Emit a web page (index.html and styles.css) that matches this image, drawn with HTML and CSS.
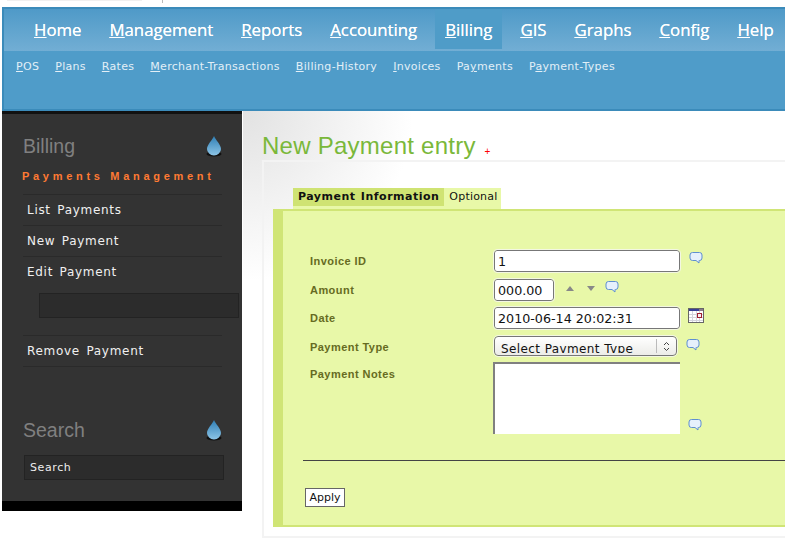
FILE: index.html
```html
<!DOCTYPE html>
<html lang="en">
<head>
    <meta charset="UTF-8">
    <title>New Payment entry</title>
    <link rel="stylesheet" href="styles.css">
</head>
<body>
    <div class="topline"><span class="topbar"></span><span class="topmark"></span></div>
    <div class="header">
        <ul class="menu">
            <li><a href="#"><u>H</u>ome</a></li>
            <li><a href="#"><u>M</u>anagement</a></li>
            <li><a href="#"><u>R</u>eports</a></li>
            <li><a href="#"><u>A</u>ccounting</a></li>
            <li class="active"><a href="#"><u>B</u>illing</a></li>
            <li><a href="#"><u>G</u>IS</a></li>
            <li><a href="#"><u>G</u>raphs</a></li>
            <li><a href="#"><u>C</u>onfig</a></li>
            <li><a href="#"><u>H</u>elp</a></li>
        </ul>
        <ul class="submenu">
            <li><a href="#"><u>P</u>OS</a></li>
            <li><a href="#"><u>P</u>lans</a></li>
            <li><a href="#"><u>R</u>ates</a></li>
            <li><a href="#"><u>M</u>erchant-Transactions</a></li>
            <li><a href="#"><u>B</u>illing-History</a></li>
            <li><a href="#"><u>I</u>nvoices</a></li>
            <li><a href="#">Pa<u>y</u>ments</a></li>
            <li><a href="#">P<u>a</u>yment-Types</a></li>
        </ul>
    </div>

    <div class="main">
        <div class="sidebar">
            <div class="side-title">
                <h2>Billing</h2>
                <svg class="drop" width="16" height="22" viewBox="0 0 16 22"><use href="#drop"/></svg>
            </div>
            <h3>Payments Management</h3>
            <ul class="side-list">
                <li><a href="#">List Payments</a></li>
                <li><a href="#">New Payment</a></li>
                <li class="with-input">
                    <a href="#">Edit Payment</a>
                    <input type="text" class="side-input edit-input">
                </li>
                <li><a href="#">Remove Payment</a></li>
            </ul>
            <div class="side-title search-title">
                <h2>Search</h2>
                <svg class="drop" width="16" height="22" viewBox="0 0 16 22"><use href="#drop"/></svg>
            </div>
            <input type="text" class="side-input search-input" value="Search">
        </div>

        <div class="content">
            <h1>New Payment entry <span class="plus">+</span></h1>
            <div class="form-box">
                <ul class="tabs">
                    <li class="selected">Payment Information</li>
                    <li>Optional</li>
                </ul>
                <div class="fieldset">
                    <div class="row row-invoice">
                        <label>Invoice ID</label>
                        <input type="text" class="field" value="1">
                        <svg class="tip" width="14" height="14" viewBox="0 0 14 14"><use href="#bubble"/></svg>
                    </div>
                    <div class="row row-amount">
                        <label>Amount</label>
                        <input type="text" class="field short" value="000.00">
                        <span class="arrow up"></span>
                        <span class="arrow down"></span>
                        <svg class="tip" width="14" height="14" viewBox="0 0 14 14"><use href="#bubble"/></svg>
                    </div>
                    <div class="row row-date">
                        <label>Date</label>
                        <input type="text" class="field" value="2010-06-14 20:02:31">
                        <svg class="cal" width="16" height="15" viewBox="0 0 16 15">
                            <rect x="0.5" y="0.5" width="15" height="14" fill="#fff" stroke="#666"/>
                            <rect x="1" y="1" width="10" height="2" fill="#3a3f96"/>
                            <rect x="11" y="1" width="4" height="2" fill="#8a7a8a"/>
                            <path d="M1 6.5h14M1 9.5h14M1 12.5h14M4.5 3v11M8.5 3v11M11.5 3v11" stroke="#d4d4dc" fill="none"/>
                            <rect x="9.5" y="5.5" width="4" height="4" fill="#f6eeee" stroke="#a02030"/>
                        </svg>
                    </div>
                    <div class="row row-type">
                        <label>Payment Type</label>
                        <div class="select-box">
                            <span class="select-text">Select Payment Type</span>
                            <span class="select-btn">
                                <svg width="7" height="11" viewBox="0 0 7 11"><path d="M1 4l2.5-2.5L6 4M1 7l2.5 2.5L6 7" fill="none" stroke="#444"/></svg>
                            </span>
                        </div>
                        <svg class="tip" width="14" height="14" viewBox="0 0 14 14"><use href="#bubble"/></svg>
                    </div>
                    <div class="row row-notes">
                        <label>Payment Notes</label>
                        <textarea class="notes"></textarea>
                        <svg class="tip" width="14" height="14" viewBox="0 0 14 14"><use href="#bubble"/></svg>
                    </div>
                    <hr>
                    <button class="apply" type="button">Apply</button>
                </div>
            </div>
        </div>
    </div>

    <svg class="defs" width="0" height="0">
        <defs>
            <linearGradient id="dropfill" x1="0" y1="0" x2="0" y2="1">
                <stop offset="0" stop-color="#2f7fb5"/>
                <stop offset="1" stop-color="#8cc4e6"/>
            </linearGradient>
            <g id="drop">
                <ellipse cx="8" cy="19" rx="7.5" ry="2.5" fill="#111"/>
                <path d="M8 1C6.5 5 1 9.500 1 14a7 6.500 0 0 0 14 0C15 9.500 9.500 5 8 1z" fill="url(#dropfill)"/>
            </g>
            <g id="bubble">
                <path d="M3.500 1.500h7a2.500 2.500 0 0 1 2.500 2.500v3a2.500 2.500 0 0 1-2.500 2.500H10v2.500L7 9.500H3.500A2.500 2.500 0 0 1 1 7V4a2.500 2.500 0 0 1 2.500-2.500z" fill="#e6f0fc" stroke="#5f8fd0"/>
            </g>
        </defs>
    </svg>
</body>
</html>
```

FILE: styles.css
```css
html, body {
    margin: 0;
    height: 540px;
    overflow: hidden;
    background-color: #fff;
}
body {
    font-family: "DejaVu Sans", sans-serif;
    font-size: 11px;
    padding-left: 2px;
    box-sizing: border-box;
}
ul {
    list-style-type: none;
    margin: 0;
    padding: 0;
}
a {
    color: inherit;
    text-decoration: none;
}
.defs {
    display: block;
}

.topline {
    height: 7px;
    display: flex;
    align-items: flex-start;
    margin-left: 5px;
}
.topbar {
    width: 135px;
    height: 1px;
    background-color: #f0f0f0;
}
.topmark {
    width: 1px;
    height: 3px;
    margin-left: 20px;
    background-color: #bbb;
}

.header {
    height: 104px;
    box-sizing: border-box;
    border-top: 2px solid #3b8bba;
    border-bottom: 2px solid #3b8bba;
    border-left: 2px solid #3b8bba;
    background-color: #4f9cc9;
}
.menu {
    display: flex;
    gap: 8px;
    height: 42px;
    padding-left: 20px;
    background: linear-gradient(#4f9ac8, #72aed4);
}
.menu li {
    padding: 0 10px;
    line-height: 42px;
    font-family: "Open Sans", sans-serif;
    font-size: 16.800px;
    color: #fff;
    text-shadow: 0 0 0.6px #fff;
}
.menu li.active {
    background-color: #4f9cc8;
    height: 40px;
}
.submenu {
    display: flex;
    gap: 16px;
    padding: 9px 0 0 12px;
    font-size: 11px;
    letter-spacing: 0.3px;
    color: #e2eff7;
}

.main {
    display: flex;
}
.sidebar {
    width: 240px;
    height: 400px;
    box-sizing: border-box;
    flex: none;
    background-color: #333;
    border-top: 3px solid #111;
    border-bottom: 10px solid #000;
    padding: 19px 20px 0 21px;
}
.side-title {
    display: flex;
    justify-content: space-between;
    align-items: center;
    height: 26px;
}
.side-title h2 {
    margin: 0;
    font-family: "Liberation Sans", sans-serif;
    font-weight: normal;
    font-size: 19.500px;
    color: #808080;
}
.sidebar h3 {
    margin: 11px 0 11px -1px;
    font-family: "Liberation Sans", sans-serif;
    font-size: 11px;
    line-height: 13px;
    font-weight: bold;
    letter-spacing: 3.700px;
    white-space: nowrap;
    color: #ff7a33;
}
.side-list li {
    border-top: 1px solid #2a2a2a;
    line-height: 30px;
    padding-left: 4px;
    letter-spacing: 0.7px;
    word-spacing: 2px;
    font-size: 12px;
    color: #f0f0f0;
}
.side-list li:last-child {
    border-bottom: 1px solid #2a2a2a;
}
.side-input {
    display: block;
    box-sizing: border-box;
    height: 25px;
    background-color: #2c2c2c;
    border: 1px solid #232323;
    color: #eee;
    font-family: "DejaVu Sans", sans-serif;
    font-size: 11px;
    letter-spacing: 0.6px;
    padding: 0 5px;
}
.edit-input {
    width: 200px;
    margin: 6px 0 17px 12px;
}
.search-title {
    margin-top: 50px;
}
.search-input {
    width: 200px;
    margin: 12px 0 0 1px;
}

.content {
    flex: 1;
    min-width: 0;
    margin-left: 1px;
    padding: 23px 0 0 19px;
    background: radial-gradient(circle at 0 0, #e2e2e2, #fff 170px);
    height: 406px;
}
.content h1 {
    margin: 0 0 2px;
    font-family: "Liberation Sans", sans-serif;
    font-weight: normal;
    font-size: 24px;
    letter-spacing: 0.25px;
    line-height: 24px;
    color: #7ab83a;
}
.plus {
    font-size: 10px;
    line-height: 0;
    vertical-align: -1px;
    color: #f00;
    margin-left: 2px;
}
.form-box {
    width: 560px;
    height: 378px;
    box-sizing: border-box;
    border: 2px solid #f3f3f3;
    padding: 26px 0 0 9px;
}
.tabs {
    display: flex;
    height: 21px;
    margin-left: 20px;
    background-color: #e8f8a8;
    width: 208px;
    font-size: 11px;
    white-space: nowrap;
}
.tabs li {
    height: 18px;
    line-height: 17px;
    padding: 0 5px;
    color: #111;
    letter-spacing: 0.2px;
}
.tabs li.selected {
    background-color: #cfe373;
    font-weight: bold;
    letter-spacing: 0.5px;
    word-spacing: 1px;
}
.fieldset {
    height: 318px;
    box-sizing: border-box;
    background-color: #e8f8a8;
    border-left: 10px solid #d0e576;
    border-top: 2px solid #d0e576;
    border-bottom: 2px solid #d0e576;
    padding: 0 0 0 20px;
    width: 540px;
}
.row {
    display: flex;
    align-items: flex-start;
}
.row label {
    width: 191px;
    flex: none;
    padding: 5px 0 0 7px;
    box-sizing: border-box;
    font-family: "Liberation Sans", sans-serif;
    font-weight: bold;
    font-size: 11px;
    letter-spacing: 0.45px;
    color: #666b22;
}
.row-invoice {
    margin-top: 39px;
    height: 29px;
}
.row-amount {
    height: 28px;
}
.row-date {
    height: 29px;
}
.row-type {
    height: 26px;
}
.row-notes {
    height: 72px;
}
.field {
    box-sizing: border-box;
    width: 186px;
    height: 22px;
    border: 1px solid #777;
    outline: 1px solid #f3f7e2;
    border-radius: 3px;
    background-color: #fff;
    padding: 1px 3px 0;
    font-family: "DejaVu Sans", sans-serif;
    font-size: 12.700px;
    color: #111;
}
.field.short {
    width: 60px;
}
.tip {
    margin: 1px 0 0 9px;
}
.arrow {
    width: 0;
    height: 0;
    border-left: 4px solid transparent;
    border-right: 4px solid transparent;
    margin: 7px 0 0 12px;
}
.arrow.up {
    border-bottom: 5px solid #888;
}
.arrow.down {
    border-top: 5px solid #888;
    margin-left: 13px;
}
.row-amount .tip {
    margin: 1px 0 0 10px;
}
.cal {
    margin: 1px 0 0 8px;
}
.select-box {
    display: flex;
    box-sizing: border-box;
    width: 183px;
    height: 20px;
    border: 1px solid #777;
    outline: 1px solid #f3f7e2;
    border-radius: 4px;
    background: linear-gradient(#fff, #ecece8);
    overflow: hidden;
}
.select-text {
    flex: 1;
    height: 13px;
    overflow: hidden;
    margin-top: 3px;
    padding-left: 6px;
    font-size: 12px;
    line-height: 19px;
    letter-spacing: 0.4px;
    white-space: nowrap;
    color: #111;
}
.select-btn {
    width: 19px;
    border-left: 1px solid #bbb;
    margin: 2px 0;
    display: flex;
    justify-content: center;
    align-items: center;
}
.row-type .tip {
    margin: 2px 0 0 9px;
}
.notes {
    box-sizing: border-box;
    width: 187px;
    height: 72px;
    border: 2px solid #808080;
    border-right: 0;
    border-bottom: 0;
    background-color: #fff;
    margin: 0 0 0 -1px;
    padding: 0;
    resize: none;
}
.row-notes .tip {
    margin: 56px 0 0 8px;
}
.row-notes label {
    padding-top: 6px;
}
.fieldset hr {
    border: 0;
    border-top: 1px solid #444;
    margin: 26px 0 0;
}
.apply {
    display: block;
    margin: 27px 0 0 2px;
    box-sizing: border-box;
    width: 40px;
    height: 19px;
    padding: 0;
    background-color: #fff;
    border: 1px solid #666;
    font-family: "DejaVu Sans", sans-serif;
    font-size: 11px;
    color: #111;
}
```
